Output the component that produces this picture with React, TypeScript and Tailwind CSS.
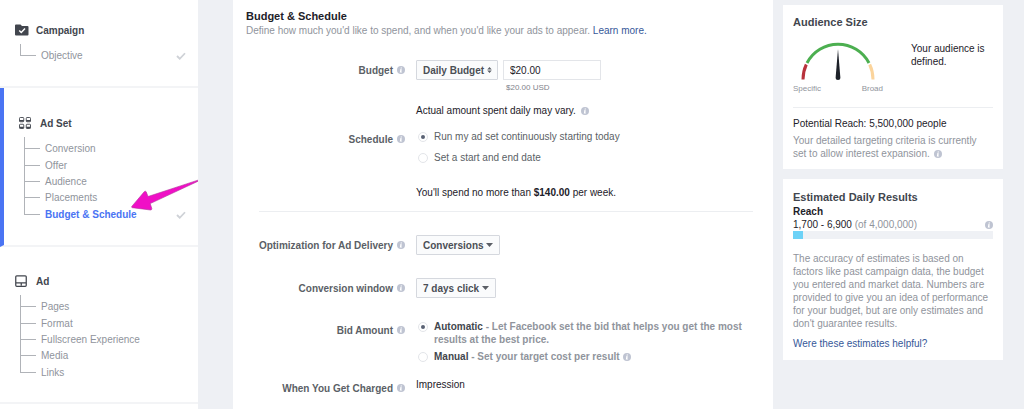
import React from "react";

interface InfoIconProps {
  className?: string;
}

const InfoIcon = ({ className = "" }: InfoIconProps) => (
  <svg className={`h-2 w-2 shrink-0 ${className}`} viewBox="0 0 16 16" aria-hidden="true">
    <circle cx="8" cy="8" r="8" fill="#bfc4d2" />
    <path d="M7.400 2.800h2.600l-.4 2.200H7zM6.400 6.400h3.200l-.9 5h1.200l-.3 1.800H5.600l.9-5H6z" fill="#fff" />
  </svg>
);

const CheckIcon = () => (
  <svg className="h-2 w-[10px]" viewBox="0 0 20 16" fill="none" aria-hidden="true">
    <path d="M2 8l5.500 5.500L18 2.500" stroke="#cfd2d7" strokeWidth="3.600" />
  </svg>
);

const CampaignIcon = () => (
  <svg className="h-3 w-[14px]" viewBox="0 0 28 24" aria-hidden="true">
    <path d="M2 1h9l3 3h11a2 2 0 0 1 2 2v15a2 2 0 0 1-2 2H2a2 2 0 0 1-2-2V3a2 2 0 0 1 2-2z" fill="#42464e" />
    <path d="M8.500 13l4 4 7.500-8" fill="none" stroke="#fff" strokeWidth="3" />
  </svg>
);

const AdSetIcon = () => (
  <svg className="h-3 w-3" viewBox="0 0 24 24" fill="none" stroke="#42464e" aria-hidden="true">
    <g strokeWidth="1.800">
      <rect x="1" y="1" width="8.500" height="8.500" rx="1.500" />
      <rect x="14.500" y="1" width="8.500" height="8.500" rx="1.500" />
      <rect x="1" y="14.500" width="8.500" height="8.500" rx="1.500" />
      <rect x="14.500" y="14.500" width="8.500" height="8.500" rx="1.500" />
    </g>
    <path d="M1 7.500h8.500M14.500 7.500H23M1 21h8.500M14.500 21H23" strokeWidth="3" />
  </svg>
);

const AdIcon = () => (
  <svg className="h-3 w-3" viewBox="0 0 24 24" fill="none" stroke="#42464e" strokeWidth="2.500" aria-hidden="true">
    <rect x="1.500" y="1.500" width="21" height="21" rx="2" />
    <path d="M2 15.500h20M12.500 15.500v6" />
  </svg>
);

interface NavSectionProps {
  title: string;
  icon: React.ReactNode;
  items: string[];
  active?: string;
  checked?: string;
  listClass?: string;
  className?: string;
}

const NavSection = ({ title, icon, items, active, checked, listClass = "", className = "" }: NavSectionProps) => (
  <section className={`border-b-2 border-b-[#f3f4f6] pl-[15px] pr-3 ${className}`}>
    <h2 className="flex h-4 items-center text-[10px] font-bold text-[#42464e]">
      <span className="flex w-[21px]">{icon}</span>
      {title}
    </h2>
    <ul className={`ml-[5px] mt-[10px] flex flex-col ${listClass}`}>
      {items.map((item, i) => (
        <li key={item} className="relative flex flex-1 items-center">
          <span
            className={`absolute bottom-1/2 left-0 w-4 border-b border-l border-[#b0b3b8] ${
              i === 0 ? "h-3" : "h-[17px]"
            }`}
          />
          <a
            href="#"
            className={`ml-[21px] flex-1 text-[10px] leading-4 ${
              item === active ? "font-bold text-[#4a74f3]" : "text-[#90949c]"
            }`}
          >
            {item}
          </a>
          {item === checked && <CheckIcon />}
        </li>
      ))}
    </ul>
  </section>
);

interface FieldProps {
  label: string;
  htmlFor?: string;
  className?: string;
  children: React.ReactNode;
}

const Field = ({ label, htmlFor, className = "", children }: FieldProps) => (
  <div className={`flex items-start gap-[11px] ${className}`}>
    <div className="flex h-5 w-[159px] shrink-0 items-center justify-end gap-1">
      <label htmlFor={htmlFor} className="text-[10px] font-bold text-[#5b5f66]">
        {label}
      </label>
      <InfoIcon />
    </div>
    <div className="min-w-0 flex-1">{children}</div>
  </div>
);

interface SelectProps {
  id: string;
  value: string;
  double?: boolean;
  className: string;
}

const Select = ({ id, value, double, className }: SelectProps) => (
  <div className={`relative h-5 ${className}`}>
    <select
      id={id}
      className="block h-5 w-full appearance-none rounded-[1px] border border-[#d5d8de] bg-[#fafbfc] pl-[6px] text-[10px] font-bold text-[#4b4f56] outline-0"
    >
      <option>{value}</option>
    </select>
    {double ? (
      <svg className="pointer-events-none absolute right-[6px] top-[7px] h-[6px] w-[5px]" viewBox="0 0 10 12" fill="#5b5f66">
        <path d="M5 0l4.500 5h-9zM5 12L.5 7h9z" />
      </svg>
    ) : (
      <svg className="pointer-events-none absolute right-[7px] top-2 h-1 w-[7px]" viewBox="0 0 14 8" fill="#5b5f66">
        <path d="M0 0h14L7 8z" />
      </svg>
    )}
  </div>
);

interface RadioProps {
  name: string;
  defaultChecked?: boolean;
  children: React.ReactNode;
}

const Radio = ({ name, defaultChecked, children }: RadioProps) => (
  <label className="flex items-start gap-[6px] pl-[2px] text-[10px] leading-[13px]">
    <input
      type="radio"
      name={name}
      defaultChecked={defaultChecked}
      className="mt-[2px] grid h-[10px] w-[10px] shrink-0 appearance-none place-items-center rounded-full border border-[#e3e5e9] bg-white before:h-1 before:w-1 before:rounded-full checked:before:bg-[#5a6274]"
    />
    <span>{children}</span>
  </label>
);

const Gauge = () => (
  <svg className="mx-auto h-[38px] w-[74px]" viewBox="0 0 74 38" fill="none" role="img" aria-label="Audience size">
    <g strokeWidth="3">
      <path d="M2 37.500A35 35 0 0 1 5.300 22.500" stroke="#b8323c" />
      <path d="M6 21A35 35 0 0 1 68 21" stroke="#4caf50" />
      <path d="M68.700 22.500A35 35 0 0 1 72 37.500" stroke="#fbd49c" />
    </g>
    <path d="M37 7l2.400 29a2.400 2 0 0 1-4.800 0z" fill="#1d2129" />
  </svg>
);

const Sidebar = () => (
  <nav className="relative w-[198px] shrink-0 overflow-hidden bg-white">
    <NavSection
      title="Campaign"
      icon={<CampaignIcon />}
      items={["Objective"]}
      checked="Objective"
      listClass="h-4"
      className="pb-[22px] pt-[22px]"
    />
    <NavSection
      title="Ad Set"
      icon={<AdSetIcon />}
      items={["Conversion", "Offer", "Audience", "Placements", "Budget & Schedule"]}
      active="Budget & Schedule"
      checked="Budget & Schedule"
      listClass="h-[82px]"
      className="border-l-4 border-l-[#4a74f3] pb-[22px] pt-[27px]"
    />
    <NavSection
      title="Ad"
      icon={<AdIcon />}
      items={["Pages", "Format", "Fullscreen Experience", "Media", "Links"]}
      listClass="h-[82px]"
      className="pb-[21px] pt-[26px]"
    />
    <svg className="absolute right-0 top-[176px] h-9 w-[68px]" viewBox="0 0 68 36" aria-hidden="true">
      <path
        d="M69 3.800L18 20.500L16.200 15.800Q15.300 14.600 14.200 15.800L1.800 30.400Q1.300 31.500 2.400 31.700L20.500 34Q22 34 21.800 32.400L20.200 27.600L69 4.800z"
        fill="#f00fc6"
        stroke="#b0309a"
        strokeWidth="0.600"
      />
    </svg>
  </nav>
);

const BudgetForm = () => (
  <main className="min-w-0 flex-1 bg-white px-[13px] pt-2">
    <h1 className="text-[11px] font-bold leading-4 text-[#1d2129]">Budget &amp; Schedule</h1>
    <p className="text-[10px] leading-[13px] text-[#90949c]">
      Define how much you'd like to spend, and when you'd like your ads to appear.{" "}
      <a href="#" className="text-[#365899]">
        Learn more.
      </a>
    </p>

    <Field label="Budget" htmlFor="budget-type" className="mt-[23px]">
      <div className="flex gap-[5px]">
        <Select id="budget-type" value="Daily Budget" double className="w-[82px]" />
        <div>
          <input
            type="text"
            aria-label="Budget amount"
            defaultValue="$20.00"
            className="block h-5 w-[98px] border border-[#e3e5e9] px-[6px] text-[10px] text-[#1d2129] outline-0"
          />
          <p className="pl-[3px] pt-[2px] text-[8px] leading-3 text-[#7f838b]">$20.00 USD</p>
        </div>
      </div>
      <p className="mt-[10px] flex items-center gap-[5px] text-[10px] leading-[13px] text-[#1d2129]">
        Actual amount spent daily may vary. <InfoIcon />
      </p>
    </Field>

    <Field label="Schedule" className="mt-3">
      <div className="flex flex-col gap-2 pt-px text-[#5b5f66]">
        <Radio name="schedule" defaultChecked>
          Run my ad set continuously starting today
        </Radio>
        <Radio name="schedule">Set a start and end date</Radio>
      </div>
      <p className="mt-[22px] text-[10px] leading-[13px] text-[#1d2129]">
        You'll spend no more than <b>$140.00</b> per week.
      </p>
    </Field>

    <hr className="ml-[13px] mr-[7px] mt-3 border-[#eceef1]" />

    <Field label="Optimization for Ad Delivery" htmlFor="optimization" className="mt-[23px]">
      <Select id="optimization" value="Conversions" className="w-[84px]" />
    </Field>
    <Field label="Conversion window" htmlFor="conversion-window" className="mt-[23px]">
      <Select id="conversion-window" value="7 days click" className="w-20" />
    </Field>
    <Field label="Bid Amount" className="mt-[22px]">
      <div className="flex flex-col gap-1 font-bold text-[#90949c]">
        <Radio name="bid" defaultChecked>
          <span className="text-[#42464e]">Automatic</span> - Let Facebook set the bid that helps you get the most
          results at the best price.
        </Radio>
        <Radio name="bid">
          <span className="text-[#42464e]">Manual</span> - Set your target cost per result{" "}
          <InfoIcon className="ml-px inline" />
        </Radio>
      </div>
    </Field>
    <Field label="When You Get Charged" className="mt-[15px]">
      <p className="text-[10px] leading-[13px] text-[#1d2129]">Impression</p>
    </Field>
  </main>
);

const AudienceCard = () => (
  <section className="bg-white px-[10px] pb-[9px] pt-[9px] text-[10px] leading-[13px]">
    <h2 className="text-[11px] font-bold leading-4 text-[#42464e]">Audience Size</h2>
    <div className="mt-3 flex justify-between">
      <div className="w-[90px]">
        <Gauge />
        <div className="flex justify-between pt-[3px] text-[8px] leading-3 text-[#90949c]">
          <span>Specific</span>
          <span>Broad</span>
        </div>
      </div>
      <p className="w-[82px] text-[#1d2129]">Your audience is defined.</p>
    </div>
    <hr className="mt-3 border-[#eceef1]" />
    <p className="mt-[9px] text-[#1d2129]">Potential Reach: 5,500,000 people</p>
    <p className="mt-1 pr-[10px] text-[#90949c]">
      Your detailed targeting criteria is currently set to allow interest expansion.{" "}
      <InfoIcon className="ml-px inline" />
    </p>
  </section>
);

const ResultsCard = () => {
  const reached = 5;

  return (
    <section className="bg-white px-[10px] pb-[10px] pt-[10px] text-[10px] leading-[13px]">
      <h2 className="text-[11px] font-bold leading-4 text-[#42464e]">Estimated Daily Results</h2>
      <h3 className="font-bold text-[#1d2129]">Reach</h3>
      <div className="flex items-center justify-between">
        <p className="text-[#1d2129]">
          1,700 - 6,900 <span className="text-[#90949c]">(of 4,000,000)</span>
        </p>
        <InfoIcon />
      </div>
      <div className="h-2 bg-[#eff1f5]">
        <div className="h-2 bg-[#6dd2f7]" style={{ width: `${reached}%` }} />
      </div>
      <p className="mt-[13px] text-[#90949c]">
        The accuracy of estimates is based on factors like past campaign data, the budget you entered and market data.
        Numbers are provided to give you an idea of performance for your budget, but are only estimates and don't
        guarantee results.
      </p>
      <a href="#" className="mt-[7px] block text-[#365899]">
        Were these estimates helpful?
      </a>
    </section>
  );
};

const App = () => {
  return (
    <div className="flex min-h-screen bg-[#eef0f4] font-['Liberation_Sans',Arial,sans-serif]">
      <Sidebar />
      <div className="ml-[35px] flex min-w-0 flex-1 pr-[21px]">
        <BudgetForm />
        <aside className="ml-[10px] flex w-[220px] shrink-0 flex-col gap-[10px] pt-[5px]">
          <AudienceCard />
          <ResultsCard />
        </aside>
      </div>
    </div>
  );
};

export default App;
